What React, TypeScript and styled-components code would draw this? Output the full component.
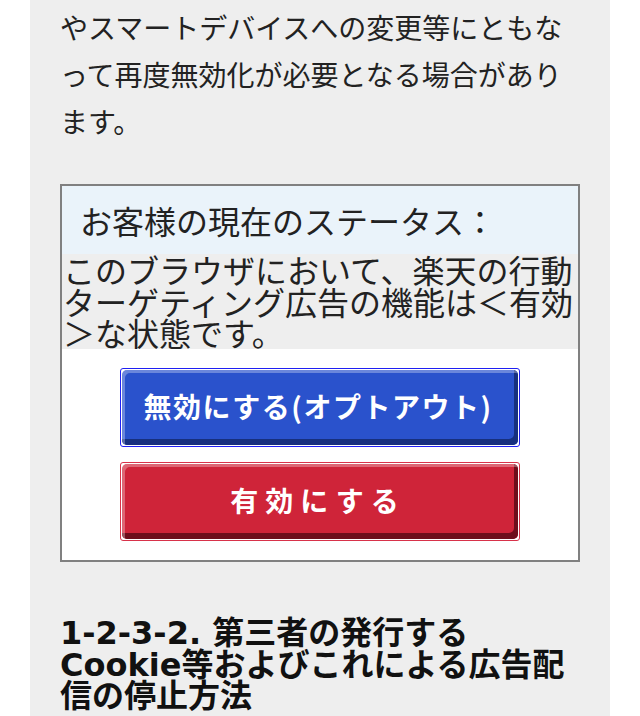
import React from "react";
import styled, { createGlobalStyle } from "styled-components";

const GlobalStyle = createGlobalStyle`
  html, body {
    margin: 0;
    padding: 0;
    background: #ffffff;
  }
  body {
    font-family: "Noto Sans CJK JP", "Noto Sans", sans-serif;
    color: #222;
  }
`;

const Panel = styled.main`
  margin: 0 30px;
  padding: 4px 30px 0;
  background: #eeeeee;
  min-height: 716px;
  box-sizing: border-box;
  overflow: hidden;
`;

const Lead = styled.p`
  margin: 0;
  font-size: 28px;
  line-height: 47px;
  color: #222;
`;

const StatusBox = styled.section`
  margin-top: 39px;
  border: 2px solid #808080;
  background: #ffffff;
  padding-bottom: 19px;
`;

const StatusTitle = styled.div`
  background: #eaf3fa;
  font-size: 32px;
  line-height: 44px;
  padding: 12px 18px;
  color: #222;
`;

const StatusText = styled.div`
  background: #eeeeee;
  font-size: 32px;
  line-height: 31.7px;
  color: #222;
  padding: 0 0 0 1px;
`;

const Actions = styled.div`
  display: flex;
  flex-direction: column;
  align-items: center;
  gap: 15px;
  padding-top: 19px;
`;

const tones = {
  blue: {
    edge: "#1f1ff2",
    face: "#2a52cc",
    light: "rgba(255,255,255,0.3)",
    dark: "#17307e",
  },
  red: {
    edge: "#d8324a",
    face: "#cf2439",
    light: "rgba(255,255,255,0.3)",
    dark: "#6e0e1c",
  },
};

type Tone = keyof typeof tones;

const ActionButton = styled.button<{ $tone: Tone }>`
  width: 400px;
  height: 79px;
  flex: 0 0 79px;
  padding: 1px;
  box-sizing: border-box;
  border: 1px solid ${(p) => tones[p.$tone].edge};
  border-radius: 3px;
  background: #ffffff;
  cursor: pointer;
  display: flex;
`;

const Face = styled.span<{ $tone: Tone; $spacing: number }>`
  flex: 1;
  display: flex;
  align-items: center;
  justify-content: center;
  border-radius: 5px;
  background: ${(p) => tones[p.$tone].face};
  box-shadow:
    inset 3px 3px 0 ${(p) => tones[p.$tone].light},
    inset -4px -6px 0 ${(p) => tones[p.$tone].dark};
  color: #ffffff;
  font-family: "Noto Sans CJK JP", sans-serif;
  font-weight: 700;
  font-size: 28px;
  letter-spacing: ${(p) => p.$spacing}px;
  padding: 0 4px 4px 0;
`;

const Heading = styled.h2`
  margin: 56px 0 0;
  font-family: "DejaVu Sans", "Noto Sans CJK JP", sans-serif;
  font-size: 32px;
  line-height: 31.5px;
  font-weight: 700;
  color: #111;
`;

export default function App() {
  return (
    <>
      <GlobalStyle />
      <Panel>
        <Lead>
          やスマートデバイスへの変更等にともなって再度無効化が必要となる場合があります。
        </Lead>
        <StatusBox>
          <StatusTitle>お客様の現在のステータス：</StatusTitle>
          <StatusText>
            このブラウザにおいて、楽天の行動ターゲティング広告の機能は＜有効＞な状態です。
          </StatusText>
          <Actions>
            <ActionButton $tone="blue" type="button">
              <Face $tone="blue" $spacing={1.5}>
                無効にする(オプトアウト)
              </Face>
            </ActionButton>
            <ActionButton $tone="red" type="button">
              <Face $tone="red" $spacing={7}>
                有効にする
              </Face>
            </ActionButton>
          </Actions>
        </StatusBox>
        <Heading>
          1-2-3-2.&nbsp;第三者の発行するCookie等およびこれによる広告配信の停止方法
        </Heading>
      </Panel>
    </>
  );
}
